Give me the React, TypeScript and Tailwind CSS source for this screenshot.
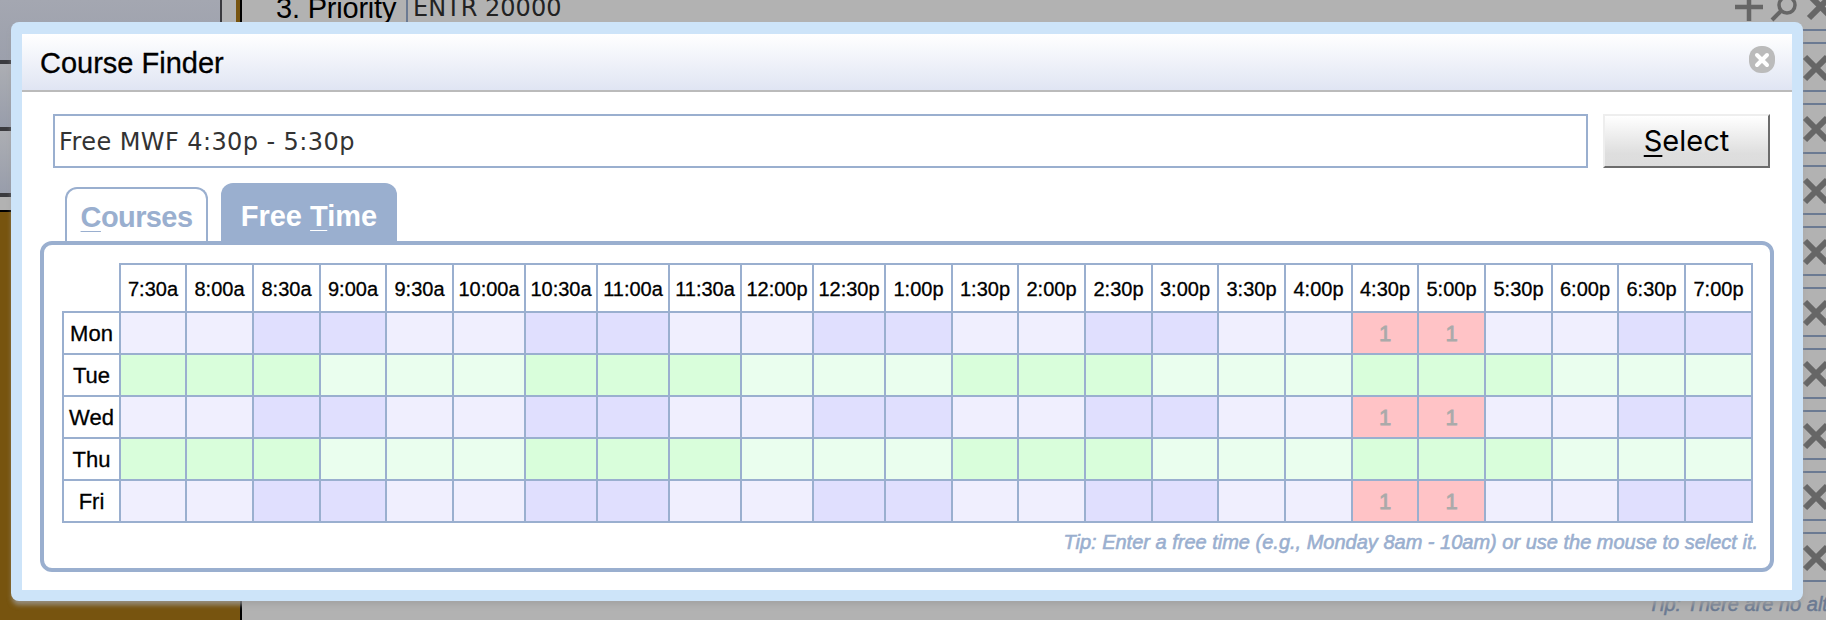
const times = [
  '7:30a', '8:00a', '8:30a', '9:00a', '9:30a', '10:00a', '10:30a', '11:00a', '11:30a', '12:00p', '12:30p', '1:00p',
  '1:30p', '2:00p', '2:30p', '3:00p', '3:30p', '4:00p', '4:30p', '5:00p', '5:30p', '6:00p', '6:30p', '7:00p',
];
const days = ['Mon', 'Tue', 'Wed', 'Thu', 'Fri'];
const columns =
  'grid grid-cols-[57px_66px_67px_67px_66px_67px_72px_72px_72px_72px_72px_72px_67px_66px_67px_67px_66px_67px_67px_66px_67px_67px_66px_67px_67px]';

function cellColor(row: number, col: number) {
  if (row % 2 === 1) return col % 6 < 3 ? 'bg-[#d9fedb]' : 'bg-[#eafeee]';
  if (col === 18 || col === 19) return 'bg-[#ffc3c6]';
  return col % 4 >= 2 ? 'bg-[#e0dffe]' : 'bg-[#f0effe]';
}

function Cross() {
  return (
    <svg width="30" height="28" viewBox="0 0 30 28" className="block shrink-0">
      <path d="M3 3L25 25M25 3L3 25" stroke="#666" strokeWidth="6" />
    </svg>
  );
}

function Backdrop() {
  return (
    <div className="flex h-full">
      <div className="flex h-full w-[242px] shrink-0 flex-col bg-[#77540f]">
        <div className="flex h-[212px]">
          <div className="flex w-[222px] flex-col border-r-2 border-[#3b3b3f]">
            <div className="h-[60px] bg-linear-to-b from-[#a4a7b1] to-[#9ca0ac]" />
            <div className="h-[67px] border-t-4 border-[#3b3b3f] bg-linear-to-b from-[#acaeb3] to-[#989dab]" />
            <div className="h-[66px] border-t-4 border-[#3b3b3f] bg-linear-to-b from-[#acaeb3] to-[#989dab]" />
            <div className="h-[17px] border-t-4 border-[#3b3b3f] bg-[#b2b2b2]" />
            <div className="h-[2px] bg-black" />
          </div>
          <div className="w-[14px] bg-[#b2b2b2]" />
          <div className="w-[6px] border-r-2 border-black" />
        </div>
        <div className="flex-1 border-r-2 border-black" />
      </div>
      <div className="flex h-full flex-1 flex-col">
        <div className="flex h-[26px] shrink-0 items-start justify-between">
          <div className="flex">
            <div className="mt-[-8px] w-[164px] pl-[34px] text-[29px] leading-[33px] tracking-[-0.2px] whitespace-nowrap text-black">3. Priority</div>
            <div className="mt-[-8px] h-[34px] border-l-2 border-[#6b7a92] pl-[5px] font-['DejaVu_Sans'] text-[24px] leading-[32px] text-[#222]">
              ENTR 20000
            </div>
          </div>
          <svg width="92" height="26" viewBox="1734 0 92 26" fill="none" stroke="#666" className="block shrink-0">
            <path d="M1735 7H1763M1749 0V21" strokeWidth="4.5" />
            <circle cx="1787" cy="5" r="8" strokeWidth="3.5" />
            <path d="M1781 11L1772 20" strokeWidth="4" />
            <path d="M1809 -5L1832 18M1832 -5L1809 18" strokeWidth="6" />
          </svg>
        </div>
        <div className="flex flex-col items-end">
          {[0, 1, 2, 3, 4, 5, 6, 7, 8].map((n) => (
            <div key={n} className={`w-[26px] overflow-hidden pt-[3px] ${n === 8 ? 'h-[66px]' : 'h-[61.3px]'}`}>
              <div className="h-[2px] bg-[#6b7a92]" />
              <div className="mt-[11px] h-[2px] bg-[#6b7a92]" />
              <div className="mt-[10px] ml-[2px]"><Cross /></div>
              {n === 8 && <div className="mt-[8px] h-[2px] bg-[#6b7a92]" />}
            </div>
          ))}
        </div>
      </div>
    </div>
  );
}

export default function App() {
  return (
    <div className="relative h-[620px] w-full overflow-hidden bg-[#b2b2b2] font-['Liberation_Sans',Arial,sans-serif]">
      <Backdrop />
      <div className="absolute top-[590px] left-[1648px] text-[20px] leading-[28px] whitespace-nowrap text-[#6b7a92] italic [-webkit-text-stroke:0.5px_#6b7a92]">
        Tip: There are no alternates
      </div>
      <div className="absolute top-[22px] left-[11px] flex h-[579px] w-[1792px] flex-col rounded-[8px] bg-[#cde4f9] px-[11px] pt-[12px] pb-[11px] shadow-[0_5px_5px_-1px_rgba(160,160,160,0.75)]">
        <div className="flex min-h-0 flex-1 flex-col bg-white">
          <div className="flex h-[58px] shrink-0 items-start justify-between border-b-2 border-[#bbb] bg-linear-to-b from-white to-[#e0e5f3] pr-[17px] pl-[18px]">
            <h1 className="pt-[12px] text-[29px] leading-[34px] text-black [-webkit-text-stroke:0.3px_#000]">Course Finder</h1>
            <svg width="26" height="27" viewBox="0 0 26 27" className="mt-[12px]">
              <rect width="26" height="27" rx="12" fill="#bbb" />
              <path d="M8 9L18 19M18 9L8 19" stroke="#fff" strokeWidth="4" strokeLinecap="round" />
            </svg>
          </div>
          <div className="flex h-[76px] shrink-0 pt-[22px] pr-[22px] pl-[31px]">
            <div className="w-[1535px] border-2 border-[#9aafcf] pl-[4px] font-['DejaVu_Sans'] text-[24px] leading-[52px] tracking-[0.42px] text-[#333]">
              Free MWF 4:30p - 5:30p
            </div>
            <button className="ml-[15px] w-[167px] border-2 border-t-[#eee] border-r-[#6c6c6c] border-b-[#6c6c6c] border-l-[#eee] bg-linear-to-b from-white via-[#dedede] via-75% to-[#dcdcdc] font-['Inter'] text-[29px] leading-[50px] text-black">
              <span className="underline decoration-2 underline-offset-[4px] [text-decoration-skip-ink:none]">S</span>elect
            </button>
          </div>
          <div className="flex h-[73px] shrink-0 items-end pl-[43px] text-[29px] font-bold">
            <div className="h-[54px] w-[143px] rounded-t-[12px] border-2 border-b-0 border-[#9aafcf] text-center leading-[56px] tracking-[-0.6px] text-[#9aafcf]">
              <span className="underline decoration-1 underline-offset-[4px] [text-decoration-skip-ink:none]">C</span>ourses
            </div>
            <div className="ml-[13px] h-[58px] w-[176px] rounded-t-[12px] bg-[#9aafcf] text-center leading-[67px] text-white">
              Free <span className="underline decoration-1 underline-offset-[4px] [text-decoration-skip-ink:none]">T</span>ime
            </div>
          </div>
          <div className="ml-[18px] flex h-[331px] w-[1734px] shrink-0 flex-col rounded-[12px] border-4 border-[#9aafcf] pt-[18px] pl-[18px]">
            <div className={`${columns} h-[48px] shrink-0 grid-rows-[48px]`}>
              <div />
              {times.map((t, i) => (
                <div
                  key={t}
                  className={`border-t-2 border-l-2 border-[#9aafcf] text-center text-[20px] leading-[48px] whitespace-nowrap text-black [-webkit-text-stroke:0.3px_#000] ${i === 23 ? 'mr-[-2px] border-r-2' : ''}`}
                >
                  {t}
                </div>
              ))}
            </div>
            {days.map((d, r) => (
              <div key={d} className={`${columns} shrink-0 ${r === 4 ? 'h-[44px] grid-rows-[44px]' : 'h-[42px] grid-rows-[42px]'}`}>
                <div className={`border-t-2 border-l-2 border-[#9aafcf] text-center text-[22px] leading-[41px] text-black [-webkit-text-stroke:0.3px_#000] ${r === 4 ? 'border-b-2' : ''}`}>{d}</div>
                {times.map((t, c) => (
                  <div
                    key={t}
                    className={`border-t-2 border-l-2 border-[#9aafcf] text-center text-[22px] leading-[41px] text-[#aaa] [-webkit-text-stroke:0.8px_#aaa] ${cellColor(r, c)} ${r === 4 ? 'border-b-2' : ''} ${c === 23 ? 'mr-[-2px] border-r-2' : ''}`}
                  >
                    {r % 2 === 0 && (c === 18 || c === 19) ? '1' : ''}
                  </div>
                ))}
              </div>
            ))}
            <p className="pt-[5px] pr-[12px] text-right text-[20px] leading-[28px] text-[#9aafcf] italic [-webkit-text-stroke:0.6px_#9aafcf]">
              Tip: Enter a free time (e.g., Monday 8am - 10am) or use the mouse to select it.
            </p>
          </div>
        </div>
      </div>
    </div>
  );
}
